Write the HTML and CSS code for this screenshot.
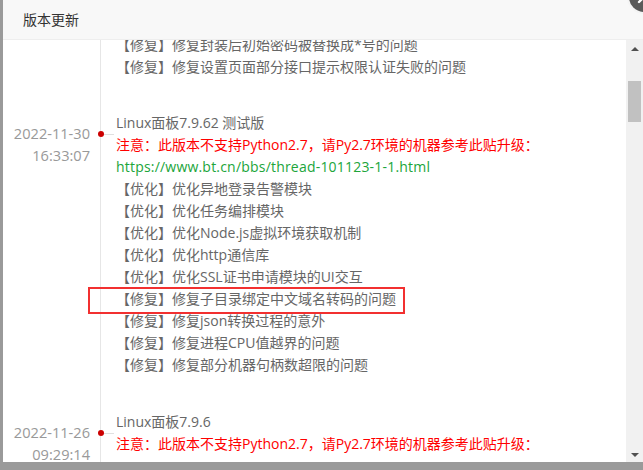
FILE: index.html
```html
<!DOCTYPE html>
<html lang="zh-CN">
<head>
<meta charset="utf-8">
<title>版本更新</title>
<link rel="stylesheet" href="styles.css">
</head>
<body>
<div class="layer">
  <div class="head">版本更新</div>
  <span class="close"><svg width="30" height="30" viewBox="0 0 30 30"><path d="M10 10 L20 20 M20 10 L10 20" stroke="#fff" stroke-width="2.4" stroke-linecap="round"/></svg></span>
  <div class="main">
    <div class="list">
      <div class="entry partial">
        <div class="time"></div>
        <div class="axis"></div>
        <div class="body">
          <div class="line">【修复】修复封装后初始密码被替换成*号的问题</div>
          <div class="line">【修复】修复设置页面部分接口提示权限认证失败的问题</div>
        </div>
      </div>
      <div class="entry">
        <div class="time"><div>2022-11-30</div><div>16:33:07</div></div>
        <div class="axis"><span class="tick"></span><span class="dot"></span></div>
        <div class="body">
          <div class="line title">Linux面板7.9.62 测试版</div>
          <div class="line warn">注意：此版本不支持Python2.7，请Py2.7环境的机器参考此贴升级：</div>
          <div class="line link">https://www.bt.cn/bbs/thread-101123-1-1.html</div>
          <div class="line">【优化】优化异地登录告警模块</div>
          <div class="line">【优化】优化任务编排模块</div>
          <div class="line">【优化】优化Node.js虚拟环境获取机制</div>
          <div class="line">【优化】优化http通信库</div>
          <div class="line">【优化】优化SSL证书申请模块的UI交互</div>
          <div class="line marked">【修复】修复子目录绑定中文域名转码的问题</div>
          <div class="line">【修复】修复json转换过程的意外</div>
          <div class="line">【修复】修复进程CPU值越界的问题</div>
          <div class="line">【修复】修复部分机器句柄数超限的问题</div>
        </div>
      </div>
      <div class="entry">
        <div class="time"><div>2022-11-26</div><div>09:29:14</div></div>
        <div class="axis"><span class="tick"></span><span class="dot"></span></div>
        <div class="body">
          <div class="line title">Linux面板7.9.6</div>
          <div class="line warn">注意：此版本不支持Python2.7，请Py2.7环境的机器参考此贴升级：</div>
        </div>
      </div>
    </div>
    <div class="scrollbar">
      <span class="btn"><span class="arrow up"></span></span>
      <span class="gap"></span>
      <span class="thumb"></span>
      <span class="fill"></span>
      <span class="btn"><span class="arrow down"></span></span>
    </div>
  </div>
</div>
</body>
</html>
```

FILE: styles.css
```css
html, body {
  margin: 0;
  padding: 0;
}
body {
  width: 643px;
  height: 470px;
  overflow: hidden;
  background: #9a9a9a;
  font-family: "Open Sans", "Noto Sans CJK SC", sans-serif;
  font-size: 14px;
}
.layer {
  position: relative;
  margin-left: 3px;
  width: 640px;
  height: 462px;
  background: #fff;
  display: flex;
  flex-direction: column;
}
.head {
  flex: none;
  height: 39px;
  line-height: 39px;
  padding-left: 20px;
  background: #f8f8f8;
  border-bottom: 1px solid #eee;
  color: #333;
}
.close {
  position: absolute;
  right: -16px;
  top: -18px;
  width: 30px;
  height: 30px;
  border-radius: 50%;
  background: #5a5a5a;
  box-shadow: 0 0 0 2px #f4f4f4;
}
.close svg {
  display: block;
}
.main {
  flex: 1;
  display: flex;
  min-height: 0;
}
.list {
  flex: 1;
  overflow: hidden;
}
.entry {
  display: flex;
}
.entry.partial {
  margin-top: -6px;
}
.time {
  flex: none;
  width: 87px;
  padding-top: 11px;
  text-align: right;
  color: #999;
  line-height: 22px;
  font-size: 14.6px;
}
.axis {
  flex: none;
  position: relative;
  width: 15px;
  margin-left: 10px;
  border-left: 1px solid #e6e6e6;
}
.dot {
  position: absolute;
  left: -3.5px;
  top: 20px;
  width: 6px;
  height: 6px;
  border-radius: 50%;
  background: #c00;
}
.tick {
  position: absolute;
  left: 0;
  top: 23px;
  width: 13px;
  height: 1px;
  background: #e0e0e0;
}
.body {
  flex: 1;
  color: #666;
  line-height: 22px;
  white-space: nowrap;
  padding-bottom: 34px;
}
.partial .body {
  padding-bottom: 33px;
}
.line.title {
  line-height: 23px;
}
.warn {
  color: #f00;
}
.link {
  color: #20a53a;
  letter-spacing: 0.2px;
}
.marked {
  position: relative;
}
.marked::after {
  content: "";
  position: absolute;
  left: -28px;
  top: -1px;
  width: 313px;
  height: 23px;
  border: 2px solid #f23030;
}
.scrollbar {
  flex: none;
  width: 17px;
  background: #f1f1f1;
  display: flex;
  flex-direction: column;
}
.btn {
  flex: none;
  height: 17px;
  display: flex;
  align-items: center;
  justify-content: center;
}
.gap {
  flex: none;
  height: 24px;
}
.thumb {
  flex: none;
  height: 41px;
  margin: 0 2px;
  background: #c1c1c1;
}
.fill {
  flex: 1;
}
.arrow {
  width: 0;
  height: 0;
  border-left: 4px solid transparent;
  border-right: 4px solid transparent;
}
.arrow.up {
  border-bottom: 4px solid #505050;
  margin-top: 1px;
}
.arrow.down {
  border-top: 4px solid #505050;
  margin-top: 2px;
}
```
